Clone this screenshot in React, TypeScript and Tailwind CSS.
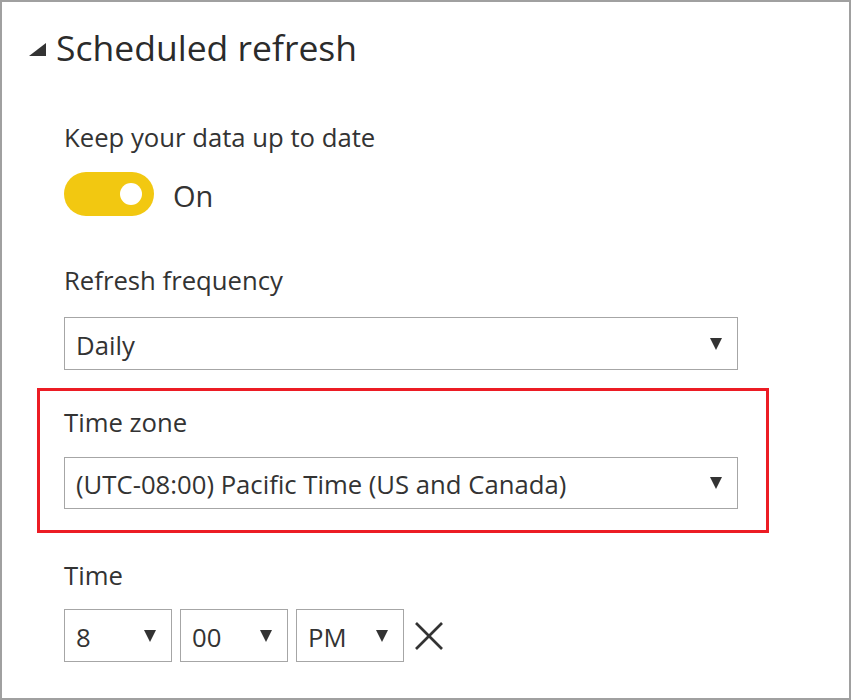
import React from "react";

function Arrow() {
  return (
    <svg width="12" height="12" viewBox="0 0 12 12" className="shrink-0">
      <polygon points="0,0 12,0 6,12" fill="#333" />
    </svg>
  );
}

function Select({ value, className }: { value: string; className: string }) {
  return (
    <div
      className={
        "flex items-center justify-between border border-[#a6a6a6] bg-white pl-[11px] pr-[15px] " +
        className
      }
    >
      <span className="text-[25.7px] leading-[25px] pt-[3px] text-[#333]">{value}</span>
      <Arrow />
    </div>
  );
}

export default function App() {
  return (
    <div className="w-[851px] h-[700px] border-2 border-[#a0a0a0] bg-white text-[#333] font-['Segoe_UI','Open_Sans',sans-serif] overflow-hidden">
      <div className="flex items-center h-[36px] mt-[27px] ml-[27px]">
        <svg width="17" height="13" viewBox="0 0 17 13" className="shrink-0 mt-[4px]">
          <polygon points="0,13 17,13 17,0" fill="#333" />
        </svg>
        <span className="ml-[10px] text-[35.5px] leading-[36px] text-[#2b2b2b]">Scheduled refresh</span>
      </div>

      <div className="pl-[62px]">
        <div className="mt-[60px] text-[25.7px] leading-[25px]">Keep your data up to date</div>

        <div className="mt-[22px] flex items-center h-[44px]">
          <div className="w-[90px] h-[44px] rounded-full bg-[#f2c811] flex items-center justify-end pr-[12px]">
            <div className="w-[22px] h-[22px] rounded-full bg-white" />
          </div>
          <span className="ml-[19px] text-[29px] leading-[29px] pt-[3px]">On</span>
        </div>

        <div className="mt-[52px] text-[25.7px] leading-[25px]">Refresh frequency</div>

        <Select value="Daily" className="mt-[24px] w-[674px] h-[53px]" />

        <div className="mt-[18px] -ml-[27px] w-[732px] border-[3px] border-[#ec1c24] pl-[24px] pt-[19px] pb-[21px]">
          <div className="text-[25.7px] leading-[25px]">Time zone</div>
          <Select
            value="(UTC-08:00) Pacific Time (US and Canada)"
            className="mt-[22px] w-[674px] h-[52px]"
          />
        </div>

        <div className="mt-[30px] text-[25.7px] leading-[25px]">Time</div>

        <div className="mt-[21px] flex items-center gap-[8px]">
          <Select value="8" className="w-[108px] h-[53px]" />
          <Select value="00" className="w-[108px] h-[53px]" />
          <Select value="PM" className="w-[108px] h-[53px]" />
          <svg width="30" height="30" viewBox="0 0 30 30" className="ml-[2px]">
            <line x1="2" y1="2" x2="28" y2="28" stroke="#333" strokeWidth="2.6" />
            <line x1="28" y1="2" x2="2" y2="28" stroke="#333" strokeWidth="2.6" />
          </svg>
        </div>
      </div>
    </div>
  );
}
